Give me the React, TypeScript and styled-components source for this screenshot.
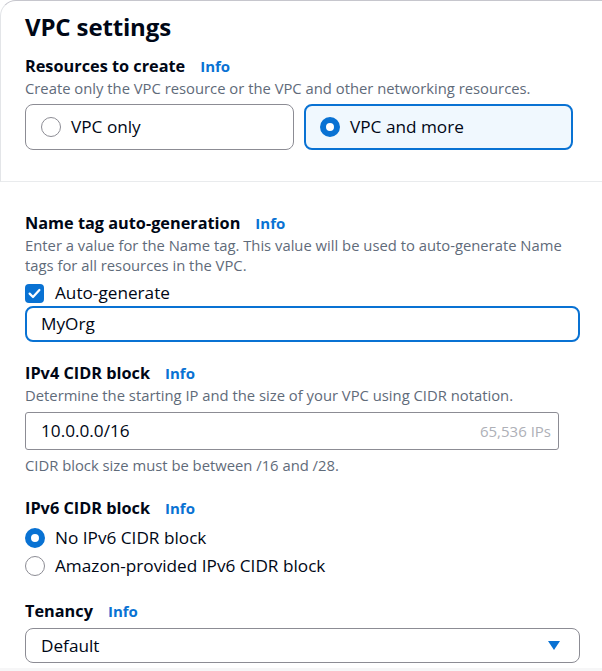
import React from "react";
import styled, { createGlobalStyle } from "styled-components";

const Global = createGlobalStyle`
  html, body { margin: 0; padding: 0; background: #ffffff; }
  body { font-family: "Open Sans", "Noto Sans", sans-serif; color: #000716; }
  * { box-sizing: border-box; }
`;

const Page = styled.div`
  width: 602px;
  height: 671px;
  overflow: hidden;
  position: relative;
  background: #fff;
`;

const TopPanel = styled.section`
  border-top: 1px solid #c6c6cd;
  border-left: 1px solid #e3e5e8;
  border-bottom: 1px solid #e9ebed;
  border-top-left-radius: 16px;
  height: 182px;
  padding: 11px 24px 0 24px;
`;

const Title = styled.h2`
  margin: 0;
  font-size: 24px;
  line-height: 30px;
  font-weight: 700;
  letter-spacing: -0.15px;
`;

const Body = styled.div`
  padding: 30px 0 0 25px;
  display: flex;
  flex-direction: column;
`;

const Field = styled.div<{ $top?: number }>`
  display: flex;
  flex-direction: column;
  margin-top: ${(p) => p.$top ?? 0}px;
`;

const LabelRow = styled.div`
  display: flex;
  align-items: baseline;
  gap: 15px;
  height: 22px;
`;

const Label = styled.span`
  font-size: 16.3px;
  line-height: 22px;
  font-weight: 700;
`;

const Info = styled.a`
  font-size: 15px;
  line-height: 22px;
  font-weight: 700;
  color: #0972d3;
  text-decoration: none;
`;

const Desc = styled.div<{ $top?: number }>`
  font-size: 14.8px;
  line-height: 20px;
  color: #5f6b7a;
  margin-top: ${(p) => p.$top ?? 0}px;
`;

const Tiles = styled.div`
  display: grid;
  grid-template-columns: 269px 269px;
  gap: 10px;
  margin-top: 6px;
`;

const Tile = styled.div<{ $selected?: boolean }>`
  height: 46px;
  border-radius: 8px;
  border: ${(p) => (p.$selected ? "2px solid #0972d3" : "1px solid #8c8c94")};
  background: ${(p) => (p.$selected ? "#f0f8fe" : "#fff")};
  display: flex;
  align-items: center;
  gap: 10px;
  padding-left: ${(p) => (p.$selected ? "14px" : "15px")};
  font-size: 17.2px;
  line-height: 24px;
`;

const Radio = styled.span<{ $checked?: boolean }>`
  width: 20px;
  height: 20px;
  border-radius: 50%;
  flex: none;
  border: ${(p) => (p.$checked ? "6px solid #0972d3" : "1.5px solid #8c8c94")};
  background: #fff;
`;

const OptionRow = styled.div<{ $top?: number; $height?: number }>`
  display: flex;
  align-items: center;
  gap: 10px;
  height: ${(p) => p.$height ?? 28}px;
  margin-top: ${(p) => p.$top ?? 0}px;
  font-size: 17.2px;
  line-height: 24px;
`;

const Checkbox = styled.span`
  width: 19px;
  height: 19px;
  border-radius: 4px;
  background: #0972d3;
  display: flex;
  align-items: center;
  justify-content: center;
  flex: none;
  margin-right: 1px;
`;

const TextBox = styled.div<{ $focused?: boolean; $width: number; $height: number; $radius: number; $top?: number }>`
  width: ${(p) => p.$width}px;
  height: ${(p) => p.$height}px;
  margin-top: ${(p) => p.$top ?? 0}px;
  border: ${(p) => (p.$focused ? "2px solid #0972d3" : "1px solid #8c8c94")};
  border-radius: ${(p) => p.$radius}px;
  display: flex;
  align-items: center;
  justify-content: space-between;
  padding: 0 7px 0 ${(p) => (p.$focused ? "14px" : "15px")};
  font-size: 17.2px;
  line-height: 24px;
`;

const Hint = styled.span`
  color: #aeb0b7;
  font-size: 15px;
`;

const Select = styled.div`
  width: 555px;
  height: 35px;
  margin-top: 6px;
  border: 1px solid #8c8c94;
  border-radius: 8px;
  display: flex;
  align-items: center;
  justify-content: space-between;
  padding: 0 19px 0 15px;
  font-size: 17.2px;
  line-height: 24px;
`;

const BottomStrip = styled.div`
  position: absolute;
  left: 0;
  right: 0;
  bottom: 0;
  height: 3px;
  background: #f6f6f7;
`;

const InfoLabel = ({ text }: { text: string }) => (
  <LabelRow>
    <Label>{text}</Label>
    <Info>Info</Info>
  </LabelRow>
);

export default function App() {
  return (
    <Page>
      <Global />
      <TopPanel>
        <Title>VPC settings</Title>
        <Field $top={13}>
          <InfoLabel text="Resources to create" />
          <Desc $top={1}>Create only the VPC resource or the VPC and other networking resources.</Desc>
          <Tiles>
            <Tile>
              <Radio />
              <span>VPC only</span>
            </Tile>
            <Tile $selected>
              <Radio $checked />
              <span>VPC and more</span>
            </Tile>
          </Tiles>
        </Field>
      </TopPanel>
      <Body>
        <Field>
          <InfoLabel text="Name tag auto-generation" />
          <Desc $top={1}>
            Enter a value for the Name tag. This value will be used to auto-generate Name
            <br />
            tags for all resources in the VPC.
          </Desc>
          <OptionRow $top={6} $height={24}>
            <Checkbox>
              <svg width="13" height="11" viewBox="0 0 13 11">
                <path d="M1.6 5.6 L5 9 L11.4 2" fill="none" stroke="#fff" strokeWidth="2.2" strokeLinecap="round" strokeLinejoin="round" />
              </svg>
            </Checkbox>
            <span>Auto-generate</span>
          </OptionRow>
          <TextBox $focused $width={555} $height={36} $radius={8} $top={1}>
            MyOrg
          </TextBox>
        </Field>
        <Field $top={20}>
          <InfoLabel text="IPv4 CIDR block" />
          <Desc $top={1}>Determine the starting IP and the size of your VPC using CIDR notation.</Desc>
          <TextBox $width={534} $height={38} $radius={3} $top={7}>
            <span>10.0.0.0/16</span>
            <Hint>65,536 IPs</Hint>
          </TextBox>
          <Desc $top={5}>CIDR block size must be between /16 and /28.</Desc>
        </Field>
        <Field $top={22}>
          <InfoLabel text="IPv6 CIDR block" />
          <OptionRow $top={5}>
            <Radio $checked />
            <span>No IPv6 CIDR block</span>
          </OptionRow>
          <OptionRow>
            <Radio />
            <span>Amazon-provided IPv6 CIDR block</span>
          </OptionRow>
        </Field>
        <Field $top={20}>
          <InfoLabel text="Tenancy" />
          <Select>
            <span>Default</span>
            <svg width="12" height="9" viewBox="0 0 12 9">
              <path d="M0 0 H12 L6 9 Z" fill="#0972d3" />
            </svg>
          </Select>
        </Field>
      </Body>
      <BottomStrip />
    </Page>
  );
}
